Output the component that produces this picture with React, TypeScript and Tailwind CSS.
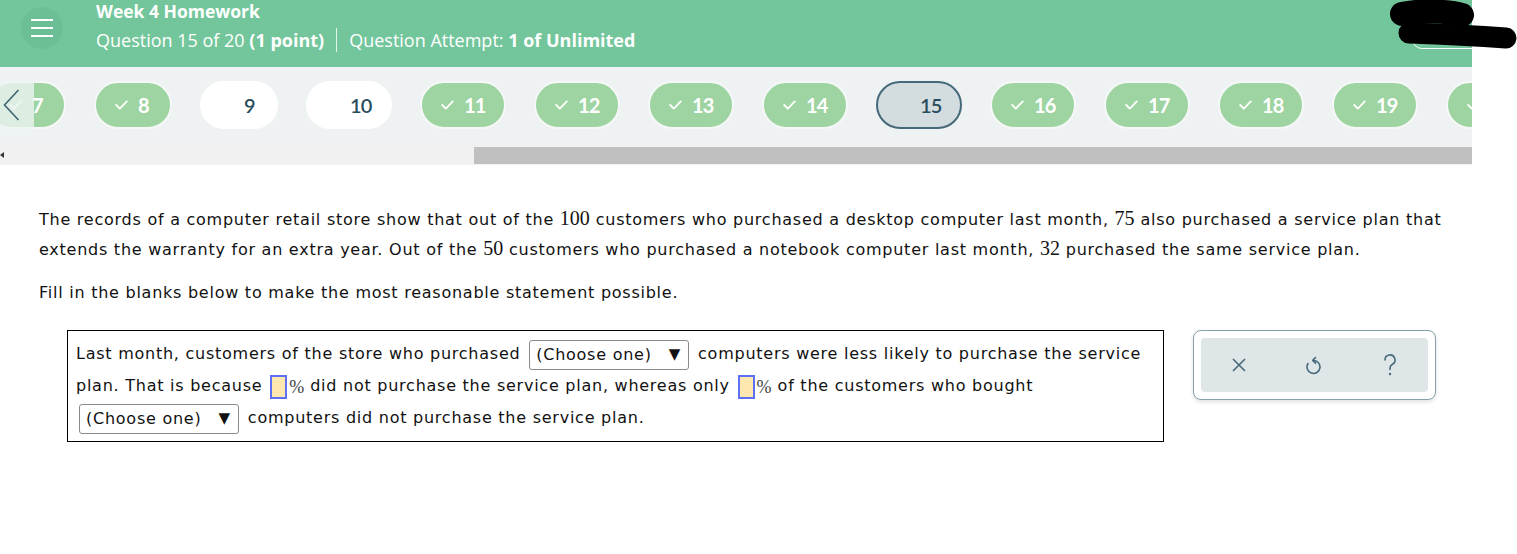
import React from "react";

type PillState = "done" | "open" | "current";

const PILLS: { n: number; state: PillState }[] = [
    { n: 7, state: "done" },
    { n: 8, state: "done" },
    { n: 9, state: "open" },
    { n: 10, state: "open" },
    { n: 11, state: "done" },
    { n: 12, state: "done" },
    { n: 13, state: "done" },
    { n: 14, state: "done" },
    { n: 15, state: "current" },
    { n: 16, state: "done" },
    { n: 17, state: "done" },
    { n: 18, state: "done" },
    { n: 19, state: "done" },
    { n: 20, state: "done" },
];

function Check({ hidden }: { hidden?: boolean }) {
    return (
        <svg width="13" height="10" viewBox="0 0 13 10" className={hidden ? "invisible" : ""}>
            <path d="M1.2 5 L4.8 8.6 L11.8 1.4" fill="none" stroke="white" strokeWidth="1.8" strokeLinecap="round" strokeLinejoin="round" />
        </svg>
    );
}

function Pill({ n, state }: { n: number; state: PillState }) {
    const base = "flex h-[48px] shrink-0 items-center gap-[10px] rounded-full border-2 pl-[19px] text-[20px] font-bold";
    const width = n < 10 ? "w-[78px]" : "w-[86px]";
    const look =
        state === "done"
            ? "bg-[#9ed4a2] border-[#f5f8f7] text-white"
            : state === "open"
            ? "bg-white border-white text-[#2a4d5e] font-semibold"
            : "bg-[#d3dcdf] border-[#45697a] text-[#2a4d5e] font-semibold";
    return (
        <div className={`${base} ${width} ${look}`}>
            <Check hidden={state !== "done"} />
            <span className="tracking-[-0.8px]">{n}</span>
        </div>
    );
}

function ChooseOne() {
    return (
        <span className="mx-[3px] inline-flex h-[30px] w-[160px] items-center justify-between rounded-[3px] border border-[#8a8a8a] bg-white pl-[6px] pr-[8px] align-middle leading-none">
            <span>(Choose one)</span>
            <span className="text-[15px] tracking-normal">▼</span>
        </span>
    );
}

function Blank() {
    return (
        <span className="inline-flex items-center align-middle">
            <span className="ml-[2px] inline-block h-[24px] w-[17px] border-2 border-[#5d6ff2] bg-[#ffe8b0]" />
            <span className="ml-[2px] mr-[6px] font-['Liberation_Serif',serif] text-[18px] leading-none tracking-normal text-[#444]">%</span>
        </span>
    );
}

function MathNum({ v }: { v: string }) {
    return <span className="font-['Liberation_Serif',serif] text-[20px] leading-none tracking-normal">{v}</span>;
}

export default function App() {
    return (
        <div className="relative min-h-[554px] w-full overflow-hidden bg-white">
            <div className="w-[1472px]">
                {/* header */}
                <div className="relative flex h-[67px] items-start overflow-hidden bg-[#73c69b] font-['Open_Sans',sans-serif] text-white">
                    <div className="ml-[21px] mt-[7px] flex h-[42px] w-[42px] flex-col items-center justify-center gap-[6px] rounded-full bg-[#6cbf94]">
                        <span className="h-[2px] w-[22px] bg-white" />
                        <span className="h-[2px] w-[22px] bg-white" />
                        <span className="h-[2px] w-[22px] bg-white" />
                    </div>
                    <div className="ml-[33px] flex flex-col">
                        <div className="mt-[1px] text-[17.5px] font-bold leading-[20px]">Week 4 Homework</div>
                        <div className="mt-[7px] flex items-center text-[18px] leading-[24px]">
                            <span>
                                Question 15 of 20 <span className="font-bold">(1 point)</span>
                            </span>
                            <span className="mx-[12px] h-[24px] w-px bg-white/80" />
                            <span>
                                Question Attempt: <span className="font-bold">1 of Unlimited</span>
                            </span>
                        </div>
                    </div>
                    <div className="absolute left-[1412px] top-[15px] h-[34px] w-[100px] rounded-[10px] border border-white" />
                </div>

                {/* question navigation strip */}
                <div className="relative bg-[#eef2f3]">
                    <div className="flex h-[78px] items-start gap-[28px] overflow-hidden pt-[14px] font-['Lato',sans-serif]">
                        <div className="-ml-[40px]" />
                        {PILLS.map((p) => (
                            <Pill key={p.n} n={p.n} state={p.state} />
                        ))}
                    </div>
                    <div className="absolute left-0 top-[14px] flex h-[48px] w-[34px] items-center bg-[#eef2f3]/80 pl-[3px]">
                        <svg width="17" height="32" viewBox="0 0 17 32">
                            <path d="M15.5 1 L1.5 16 L15.5 31" fill="none" stroke="#3f6475" strokeWidth="1.6" />
                        </svg>
                    </div>
                    <div className="flex h-[20px] items-center bg-[#f1f1f1]">
                        <span className="ml-0 h-0 w-0 border-y-[3px] border-r-[4px] border-y-transparent border-r-[#333]" />
                        <div className="ml-[470px] h-[17px] flex-1 bg-[#c0c0c0]" />
                    </div>
                </div>

                {/* question body */}
                <div className="pl-[39px] pt-[40px] font-['DejaVu_Sans',sans-serif] text-[16px] tracking-[0.75px] text-[#111]">
                    <p className="whitespace-nowrap leading-[30px]">
                        The records of a computer retail store show that out of the <MathNum v="100" /> customers who purchased a desktop computer last month, <MathNum v="75" /> also purchased a service plan that
                        <br />
                        extends the warranty for an extra year. Out of the <MathNum v="50" /> customers who purchased a notebook computer last month, <MathNum v="32" /> purchased the same service plan.
                    </p>
                    <p className="mt-[16px] leading-[24px]">Fill in the blanks below to make the most reasonable statement possible.</p>

                    <div className="ml-[28px] mt-[25px] flex items-start gap-[29px]">
                        <div className="w-[1097px] whitespace-nowrap border border-black px-[8px] pb-[7px] pt-[7px] leading-[32px]">
                            Last month, customers of the store who purchased <ChooseOne /> computers were less likely to purchase the service
                            <br />
                            plan. That is because <Blank />did not purchase the service plan, whereas only <Blank />of the customers who bought
                            <br />
                            <ChooseOne /> computers did not purchase the service plan.
                        </div>

                        <div className="rounded-[8px] border border-[#86a1aa] bg-white p-[7px] shadow-[0_2px_4px_rgba(0,0,0,0.12)]">
                            <div className="grid h-[54px] w-[227px] grid-cols-3 items-center rounded-[4px] bg-[#dfe6e8] text-[#45697a]">
                                <div className="flex justify-center">
                                    <svg width="16" height="16" viewBox="0 0 16 16">
                                        <path d="M2 2 L14 14 M14 2 L2 14" stroke="currentColor" strokeWidth="1.6" fill="none" />
                                    </svg>
                                </div>
                                <div className="flex justify-center">
                                    <svg width="18" height="20" viewBox="0 0 18 20">
                                        <path d="M8 5.5 A6.5 6.5 0 1 1 3 8.5" stroke="currentColor" strokeWidth="1.6" fill="none" strokeLinecap="round" />
                                        <path d="M10.5 2.5 L7.8 5.4 L10.5 8.3" stroke="currentColor" strokeWidth="1.6" fill="none" strokeLinecap="round" strokeLinejoin="round" />
                                    </svg>
                                </div>
                                <div className="flex justify-center">
                                    <svg width="16" height="24" viewBox="0 0 16 24">
                                        <path d="M3 7 A5 5 0 1 1 10.5 11.3 C8.8 12.3 8 13.4 8 15 V16.5" stroke="currentColor" strokeWidth="1.6" fill="none" strokeLinecap="round" />
                                        <circle cx="8" cy="21" r="1.2" fill="currentColor" />
                                    </svg>
                                </div>
                            </div>
                        </div>
                    </div>
                </div>
            </div>

            {/* redaction scribble */}
            <svg className="absolute left-[1380px] top-0" width="137" height="55" viewBox="0 0 137 55">
                <path d="M22 14 C40 10 68 11 82 15" stroke="black" strokeWidth="24" strokeLinecap="round" fill="none" />
                <path d="M29 33 C60 34 100 36 126 38" stroke="black" strokeWidth="21" strokeLinecap="round" fill="none" />
            </svg>
        </div>
    );
}
